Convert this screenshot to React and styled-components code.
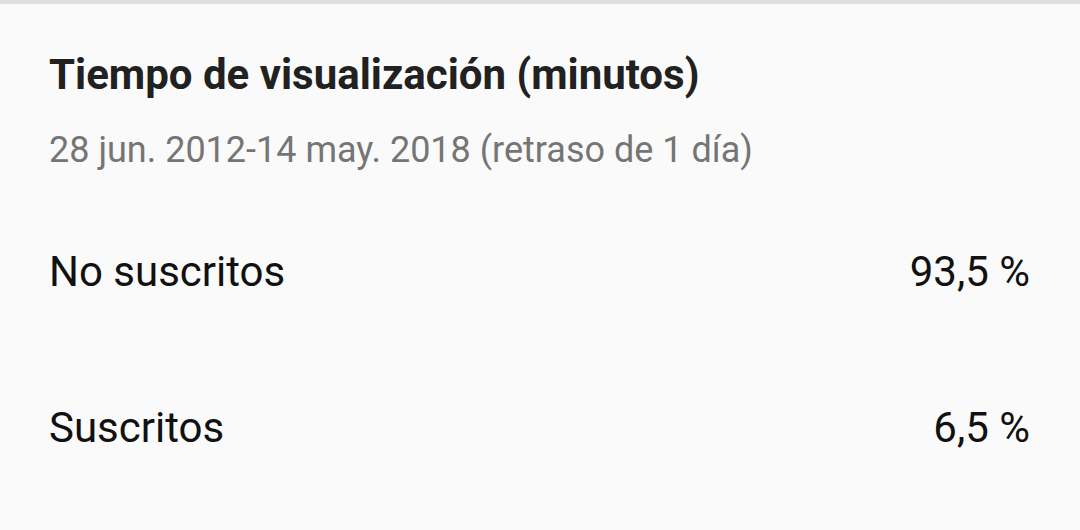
import React from "react";
import styled, { createGlobalStyle } from "styled-components";

const GlobalStyle = createGlobalStyle`
  html, body {
    margin: 0;
    padding: 0;
    background: #fafafa;
  }
  body {
    font-family: Roboto, "Noto Sans", sans-serif;
  }
`;

const Card = styled.div`
  width: 1080px;
  height: 530px;
  box-sizing: border-box;
  background: #fafafa;
  border-top: 4px solid #dedede;
  padding: 46px 50px 0 49px;
`;

const Title = styled.h1`
  margin: 0;
  font-size: 42px;
  font-weight: 700;
  color: #212121;
  line-height: 50px;
`;

const Subtitle = styled.div`
  margin-top: 28px;
  font-size: 36px;
  color: #757575;
  line-height: 44px;
`;

const List = styled.div`
  margin-top: 75px;
  display: flex;
  flex-direction: column;
  gap: 106px;
`;

const Row = styled.div`
  display: flex;
  justify-content: space-between;
  align-items: center;
  font-size: 42px;
  color: #111;
  line-height: 50px;
`;

const rows = [
  { label: "No suscritos", value: "93,5 %" },
  { label: "Suscritos", value: "6,5 %" },
];

const App = () => {
  return (
    <>
      <GlobalStyle />
      <Card>
        <Title>Tiempo de visualización (minutos)</Title>
        <Subtitle>28 jun. 2012-14 may. 2018 (retraso de 1 día)</Subtitle>
        <List>
          {rows.map((r) => (
            <Row key={r.label}>
              <span>{r.label}</span>
              <span>{r.value}</span>
            </Row>
          ))}
        </List>
      </Card>
    </>
  );
};

export default App;
